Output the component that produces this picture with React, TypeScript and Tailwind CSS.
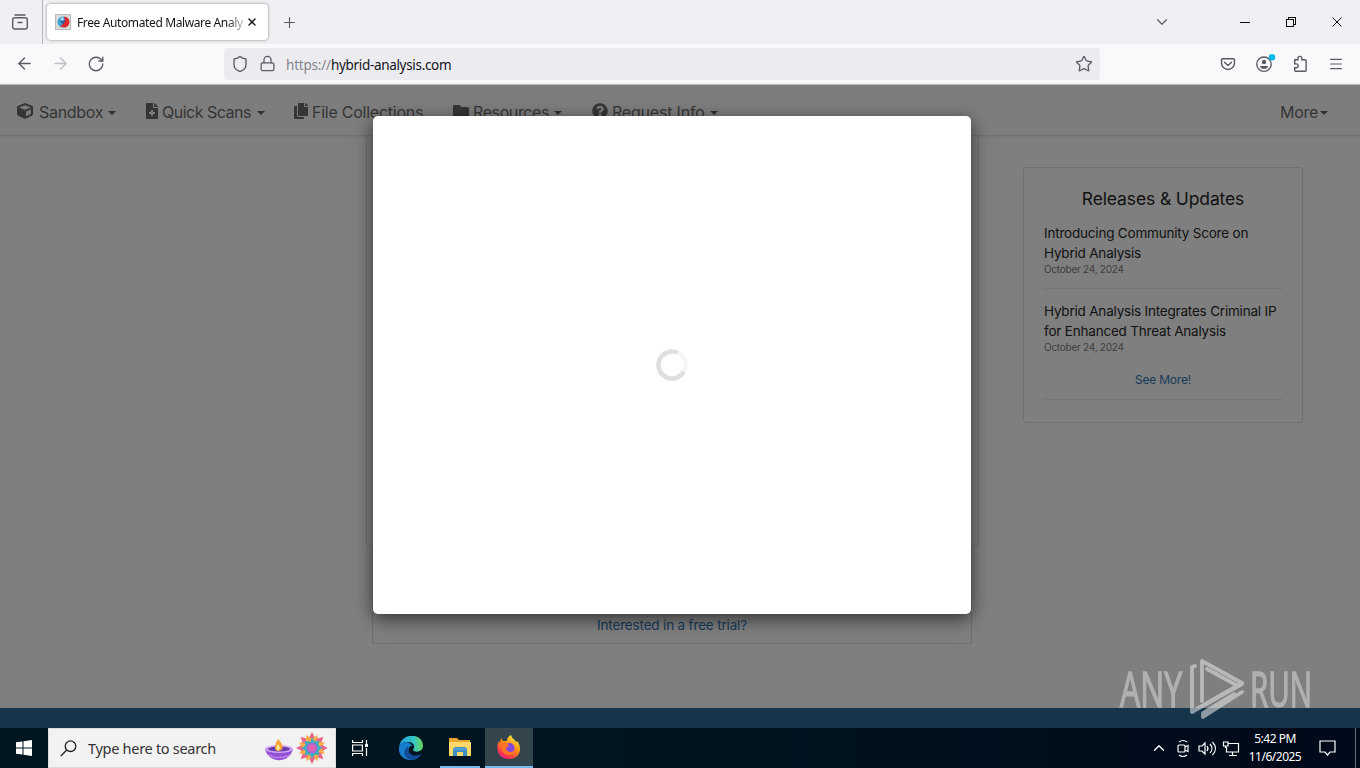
import React from 'react';
import { ArrowLeft, ArrowRight, ChevronDown, ChevronUp, Lock, Menu, Plus, RotateCw, Shield, Star, X } from 'lucide-react';
import { FaCopy, FaCube, FaFileMedical, FaFolder, FaQuestionCircle } from 'react-icons/fa';

const navItems = [
  { label: 'Sandbox', icon: FaCube, caret: true, item: 'w-[127px] gap-[6px]', text: 'w-[63px] tracking-[-0.3px]' },
  { label: 'Quick Scans', icon: FaFileMedical, caret: true, item: 'w-[149px] gap-[2px]', text: 'w-[93px] tracking-[-0.5px]' },
  { label: 'File Collections', icon: FaCopy, caret: false, item: 'w-[160px] gap-[3px]', text: 'w-[113px] tracking-[-0.25px]' },
  { label: 'Resources', icon: FaFolder, caret: true, item: 'w-[139px] gap-[4px]', text: 'w-[77px] tracking-[-0.4px]' },
  { label: 'Request Info', icon: FaQuestionCircle, caret: true, item: 'w-[140px] gap-[4px]', text: 'w-[94px] tracking-[-0.2px]' }
];

const releases = [
  { title: ['Introducing Community Score on', 'Hybrid Analysis'], date: 'October 24, 2024', line: true },
  { title: ['Hybrid Analysis Integrates Criminal IP', 'for Enhanced Threat Analysis'], date: 'October 24, 2024', line: false }
];

const Caret = () => <span className="mt-[2px] border-x-4 border-t-4 border-x-transparent border-t-[#303030]" />;

const Favicon = () => (
  <svg className="w-4 h-4 shrink-0" viewBox="0 0 16 16">
    <rect x=".5" y=".5" width="15" height="15" fill="#d9dbdd" stroke="#b9bbbd" />
    <circle cx="8" cy="8" r="5.500" fill="#3c9fd0" />
    <path d="M9 2.500a5.500 5.500 0 0 1 0 11l-4-1 3-2.500-1-3 3-1z" fill="#dd2829" />
    <path d="M6 5l4 1-1 4-3-1z" fill="#335b9b" />
    <path d="M5 5l3-2 1 3-2 1z" fill="#a9e0f1" />
  </svg>
);

const TabBar = () => (
  <div className="h-11 flex items-center bg-[#f0f0f4] text-[#5b5b66]">
    <div className="w-[43px] h-full flex items-center justify-center border-r border-[#b4b4ba]">
      <svg className="w-4 h-4 -mt-px -ml-[3px]" viewBox="0 0 16 16" fill="none" stroke="currentColor" strokeWidth="1.4">
        <path d="M3 1h10M6 8.500h4" strokeLinecap="round" />
        <rect x=".7" y="3.700" width="14.600" height="11.300" rx="2" />
      </svg>
    </div>
    <div className="w-[221px] h-9 ml-[4px] pl-[8px] flex items-center bg-white rounded shadow-[0_0_3px_rgba(0,0,0,0.45)]">
      <Favicon />
      <span className="w-[169px] ml-[6px] mt-[2px] whitespace-nowrap text-[12px] tracking-[-0.38px] text-[#15141a] [mask-image:linear-gradient(90deg,#000_150px,transparent_172px)]">
        Free Automated Malware Analy
      </span>
      <X className="w-3 h-3 text-[#15141a]" strokeWidth={2.8} />
    </div>
    <Plus className="w-[17px] h-[17px] ml-[13px] mt-px" strokeWidth={1.6} />
    <ChevronDown className="w-[18px] h-[18px] ml-auto" strokeWidth={1.6} />
    <svg className="w-[103px] h-3 ml-[69px] mr-[17px] shrink-0" viewBox="0 0 103 12" fill="none" stroke="#111" shapeRendering="crispEdges">
      <path d="M0 6.500h10M46.500 3.500h7v7h-7zM48.500 3v-1.500h7v7h-2" />
      <path d="M92.500 1.500l9 9M101.500 1.500l-9 9" shapeRendering="auto" />
    </svg>
  </div>
);

const Toolbar = () => (
  <div className="h-10 flex items-center bg-[#f9f9fb] border-b border-[#f3f3f5] text-[#5b5b66]">
    <ArrowLeft className="w-[19px] h-[19px] ml-[15px]" strokeWidth={1.8} />
    <ArrowRight className="w-[19px] h-[19px] ml-[17px] text-[#bfbfc5]" strokeWidth={1.8} />
    <RotateCw className="w-[18px] h-[18px] ml-[17px]" strokeWidth={1.8} />
    <div className="w-[876px] h-8 ml-[119px] pl-[7px] pr-[7px] flex items-center rounded bg-[#ececf0]">
      <Shield className="w-[18px] h-[18px]" strokeWidth={1.8} />
      <Lock className="w-[17px] h-[17px] ml-[10px]" strokeWidth={1.8} />
      <span className="ml-[10px] mt-[4px] whitespace-nowrap text-[13.5px] tracking-[-0.2px] text-[#84848d]">
        https://<span className="text-[#15141a] tracking-[-0.32px]">hybrid-analysis.com</span>
      </span>
      <Star className="w-[18px] h-[18px] ml-auto" strokeWidth={1.8} />
    </div>
    <svg className="w-[124px] h-[20px] ml-[120px]" viewBox="0 0 124 20" fill="none" stroke="currentColor" strokeWidth="1.4">
      <path d="M2.500 4.700h11a1 1 0 0 1 1 1v3.300a6.500 6.500 0 0 1-13 0v-3.300a1 1 0 0 1 1-1zM4.500 8.200l3.500 3.300 3.500-3.300" strokeLinecap="round" />
      <circle cx="44" cy="10.200" r="7.200" />
      <circle cx="44" cy="8" r="2.200" fill="currentColor" stroke="none" />
      <path d="M40 12h8c0 2-2 3-4 3s-4-1-4-3z" fill="currentColor" stroke="none" />
      <circle cx="52" cy="3.200" r="3.200" fill="#00b8f0" stroke="none" />
      <path d="M74.700 5.700h3.200v-1.300a2 2 0 0 1 4 0v1.300h3.200a1 1 0 0 1 1 1v9.600a1 1 0 0 1-1 1h-9.400a1 1 0 0 1-1-1v-2.600h1.600a1.900 1.900 0 0 0 0-3.800h-1.600z" />
    </svg>
    <Menu className="w-4 h-4 -ml-[16px]" strokeWidth={1.8} />
  </div>
);

const Navbar = () => (
  <nav className="h-[51px] pl-[17px] flex items-center border-b border-[#717171] bg-[#7d7d7d] text-[#353535] text-[16px] font-['Inter'] pt-[3px] shadow-[0_1px_3px_rgba(0,0,0,0.08)]">
    {navItems.map((item) => (
      <div key={item.label} className={`flex items-center shrink-0 ${item.item}`}>
        <item.icon className="w-4 h-4 -mt-px shrink-0" />
        <span className={`whitespace-nowrap shrink-0 ${item.text}`}>{item.label}</span>
        {item.caret && <Caret />}
      </div>
    ))}
    <div className="ml-auto mr-[32px] flex items-center gap-[2px]">
      <span className="tracking-[-0.3px]">More</span>
      <Caret />
    </div>
  </nav>
);

const Releases = () => (
  <aside className="w-[280px] h-[256px] mt-[31px] ml-[44px] px-5 pt-[19px] border border-[#707070] rounded-[3px] text-[#111]">
    <h2 className="text-center text-[17.5px] leading-6 tracking-[-0.13px] whitespace-nowrap">Releases &amp; Updates</h2>
    <div className="pt-[13px]">
      {releases.map((release) => (
        <div key={release.title[0]} className={release.line ? 'h-[65px] mb-[13px] border-b border-[#757575]' : 'h-[57px]'}>
          {release.title.map((line) => (
            <p key={line} className="text-[13.5px] leading-[19.500px] tracking-[-0.2px] whitespace-nowrap">{line}</p>
          ))}
          <p className="-mt-px text-[10px] leading-[14px] tracking-[-0.25px] text-[#3e3e3e]">{release.date}</p>
        </div>
      ))}
    </div>
    <div className="h-[41px] pt-[12px] text-center text-[12px] leading-[18px] tracking-[-0.2px] text-[#16395a] border-b border-[#757575]">See More!</div>
  </aside>
);

const Modal = () => (
  <div className="absolute left-[373px] top-[31px] w-[598px] h-[498px] flex items-center justify-center bg-white rounded-[5px] shadow-[0_5px_18px_rgba(0,0,0,0.6)]">
    <svg className="w-8 h-8" viewBox="0 0 32 32" fill="none" strokeWidth="4.500">
      <circle cx="16" cy="16" r="13.500" stroke="#f7f7f7" />
      <path d="M21.500 3.700a13.500 13.500 0 1 0 6.200 19" stroke="#dfdfdf" />
    </svg>
  </div>
);

const Watermark = () => (
  <svg className="absolute left-[1116px] top-[651px] w-[200px] h-[76px] overflow-visible opacity-60" viewBox="0 -4 200 76" fill="#d2d2d2" stroke="#d2d2d2">
    <text x="4" y="52" textLength="62" lengthAdjust="spacingAndGlyphs" strokeWidth="1.500" className="font-['Open_Sans'] text-[50px]">ANY</text>
    <text x="134" y="52" textLength="62" lengthAdjust="spacingAndGlyphs" strokeWidth="1.500" className="font-['Open_Sans'] text-[50px]">RUN</text>
    <g fill="none" stroke="#dedede" strokeWidth="3.800" strokeLinejoin="round" strokeLinecap="round">
      <path d="M79 11l-3 1v45l5-3 45-26M86 46V6l40 22-4 3-31-17" />
      <path d="M81 54l45-25M126 37L87 62v-4l31-19" />
    </g>
  </svg>
);

const Diya = () => (
  <svg className="w-[63px] h-[32px]" viewBox="0 0 63 32">
    <path d="M1 17c4 15 24 15 28 0z" fill="#9151d5" />
    <ellipse cx="15" cy="17" rx="14" ry="4" fill="#d2a0f4" />
    <ellipse cx="15" cy="17" rx="11" ry="2.500" fill="#693db0" />
    <path d="M4 23q11 5 22 0" fill="none" stroke="#d094ef" strokeWidth="1.500" strokeDasharray="2 1" />
    <path d="M14 7c8 8 4 12 0 12s-4-6 0-12z" fill="#f5a335" />
    <path d="M14 12c3 4 2 6 0 6s-2-3 0-6z" fill="#ffed97" />
    <g transform="translate(48 16)">
      {[0, 45, 90, 135, 180, 225, 270, 315].map((angle) => (
        <g key={angle} transform={`rotate(${angle})`}>
          <path d="M0-16l3 6-3 6-3-6z" fill="#e7668b" />
          <path d="M0-14l3 5-3 5-3-5z" fill="#f5ad47" transform="rotate(22)" />
          <path d="M0-10l4 5-4 5-4-5z" fill="#3caebd" />
        </g>
      ))}
      <circle r="5.500" fill="#9c6bd3" />
      <circle r="3.500" fill="#e65eb0" />
    </g>
  </svg>
);

const Edge = () => (
  <svg className="w-6 h-6" viewBox="0 0 24 24">
    <defs>
      <linearGradient id="edgeTop" x1="0" x2="1">
        <stop stopColor="#2298df" />
        <stop offset=".6" stopColor="#34c5c5" />
        <stop offset="1" stopColor="#6bd65b" />
      </linearGradient>
    </defs>
    <path d="M0 12C1-4 24-4 24 10c0 6-8 7-10 4 3-4 0-8-5-8-6 0-9 3-9 6z" fill="url(#edgeTop)" />
    <path d="M0 11c2-6 12-6 13-1-4-1-6 8 1 10 3 1 6 0 8-2-6 10-24 7-22-7z" fill="#167fcd" />
    <path d="M9 10c-7 6-3 13 4 14 4 0 7-2 9-6-6 4-15 0-13-8z" fill="#124c99" />
  </svg>
);

const Explorer = () => (
  <svg className="w-[22px] h-[20px]" viewBox="0 0 22 20">
    <path d="M0 1h8l2 2h11v5H0z" fill="#e5a52f" />
    <path d="M0 5h22v14H0z" fill="#ffd96c" />
    <path d="M4 19v-7l2-2h10l2 2v7h-4v-4H8v4z" fill="#3f8fc4" />
    <path d="M6 12h10" stroke="#69b6e1" />
  </svg>
);

const Firefox = () => (
  <svg className="w-6 h-6" viewBox="0 0 24 24">
    <defs>
      <linearGradient id="foxFlame" x1=".8" y1="0" x2=".2" y2="1">
        <stop stopColor="#fff44f" />
        <stop offset=".4" stopColor="#ff980e" />
        <stop offset=".8" stopColor="#ff3750" />
        <stop offset="1" stopColor="#e31587" />
      </linearGradient>
    </defs>
    <path d="M4 3l2 3h4C10 3 12 1 14 0c1 4 4 4 5 7l1-1c6 7 3 18-8 18C1 24-2 13 2 6l1 2z" fill="url(#foxFlame)" />
    <circle cx="12.500" cy="13" r="5" fill="#8547df" />
    <path d="M3 9c4-3 8-1 9 2l-3 2c0 4 6 6 10 1-1 9-15 9-16-5z" fill="#ff7425" />
  </svg>
);

const Taskbar = () => (
  <footer className="h-10 shrink-0 flex items-center bg-linear-to-r from-[#001721] via-[#001420] to-[#000919] text-white">
    <div className="w-12 flex justify-center">
      <svg className="w-4 h-4" viewBox="0 0 16 16" fill="#fff">
        <path d="M0 2.300L6.500 1.400v6H0zM7.500 1.200L16 0v7.400H7.500zM0 8.400h6.500v6.200L0 13.700zM7.500 8.400H16V16l-8.500-1.200z" />
      </svg>
    </div>
    <div className="w-[288px] h-10 pl-[11px] pr-[8px] flex items-center bg-[#f2f2f2] border border-[#dcdcdc] text-[#333]">
      <svg className="w-[17px] h-[17px]" viewBox="0 0 17 17" fill="none" stroke="#222" strokeWidth="1.300">
        <circle cx="10.500" cy="6.200" r="5.300" />
        <path d="M6.700 10L.8 16" />
      </svg>
      <span className="ml-[11px] mt-[2px] text-[14.5px] tracking-[-0.29px] whitespace-nowrap">Type here to search</span>
      <div className="ml-auto"><Diya /></div>
    </div>
    <div className="w-12 flex justify-center">
      <svg className="w-4 h-4" viewBox="0 0 16 16" fill="none" stroke="#fff" strokeWidth="1.200">
        <path d="M.6 0v2.500h9.800V0M.6 5h9.800v6H.6zM.6 16v-2.500h9.800V16M14.500 0v4M14.500 8v8" />
        <path d="M13 4h3v3h-3z" fill="#fff" stroke="none" />
      </svg>
    </div>
    <div className="w-[56px] pr-[2px] flex justify-center"><Edge /></div>
    <div className="w-10 h-10 flex items-center justify-center border-b-2 border-[#76b9ed]"><Explorer /></div>
    <div className="w-12 h-10 ml-[5px] flex items-center justify-center bg-[#34454d] border-b-2 border-[#76b9ed]"><Firefox /></div>
    <ChevronUp className="w-[18px] h-[18px] ml-auto" strokeWidth={1.8} />
    <svg className="w-[64px] h-[18px] ml-[8px]" viewBox="0 0 64 18" fill="none" stroke="#fff" strokeWidth="1.200">
      <rect x="2" y="6" width="7" height="7" rx="1" />
      <path d="M9 8l3-1.500v6L9 11M3 3q4-3 8 0M3 16q4 3 8 0" />
      <path d="M23 7h3l3-3v11l-3-3h-3zM31 7q2 2.500 0 5M34 5q4 4.500 0 9M36.500 3q6 6.500 0 13" />
      <path d="M52 4.500h10.500v8.500H50.500V8M47.500 3h4.500v4h-4.500zM49.500 7v2M56.500 13v4M53 16.500h8" />
    </svg>
    <div className="w-[66px] ml-[2px] text-center text-[12px] leading-[18px] tracking-[-0.5px] whitespace-nowrap">
      <p>5:42 PM</p>
      <p>11/6/2025</p>
    </div>
    <svg className="w-[17px] h-[16px] ml-[11px] mr-[19px]" viewBox="0 0 17 16" fill="none" stroke="#fff" strokeWidth="1.200">
      <path d="M1 1h15v11h-5l-2.500 3L6 12H1z" />
    </svg>
    <div className="w-[5px] h-10 border-l border-[#64717a]" />
  </footer>
);

const App = () => {
  return (
    <div className="relative w-[1360px] h-[768px] flex flex-col overflow-hidden bg-[#7f7f7f] font-['Noto_Sans',sans-serif]">
      <TabBar />
      <Toolbar />
      <div className="h-px shrink-0 bg-[#bfbfc2]" />
      <div className="relative flex-1 flex flex-col font-['Inter',sans-serif]">
        <Navbar />
        <main className="flex-1 pl-[366px] flex items-start">
          <div className="w-[613px] shrink-0 flex flex-col items-center">
            <div className="w-full h-[410px] border-x border-b border-[#707070] rounded-b-[3px]" />
            <div className="w-[600px] h-[98px] mr-px pt-[69px] text-center text-[13.5px] leading-5 tracking-[-0.17px] text-[#16395a] border border-t-0 border-[#707070] rounded-b-[3px]">
              Interested in a free trial?
            </div>
          </div>
          <Releases />
        </main>
        <div className="h-5 bg-[#17354a]" />
        <Modal />
      </div>
      <Taskbar />
      <Watermark />
    </div>
  );
};

export default App;
